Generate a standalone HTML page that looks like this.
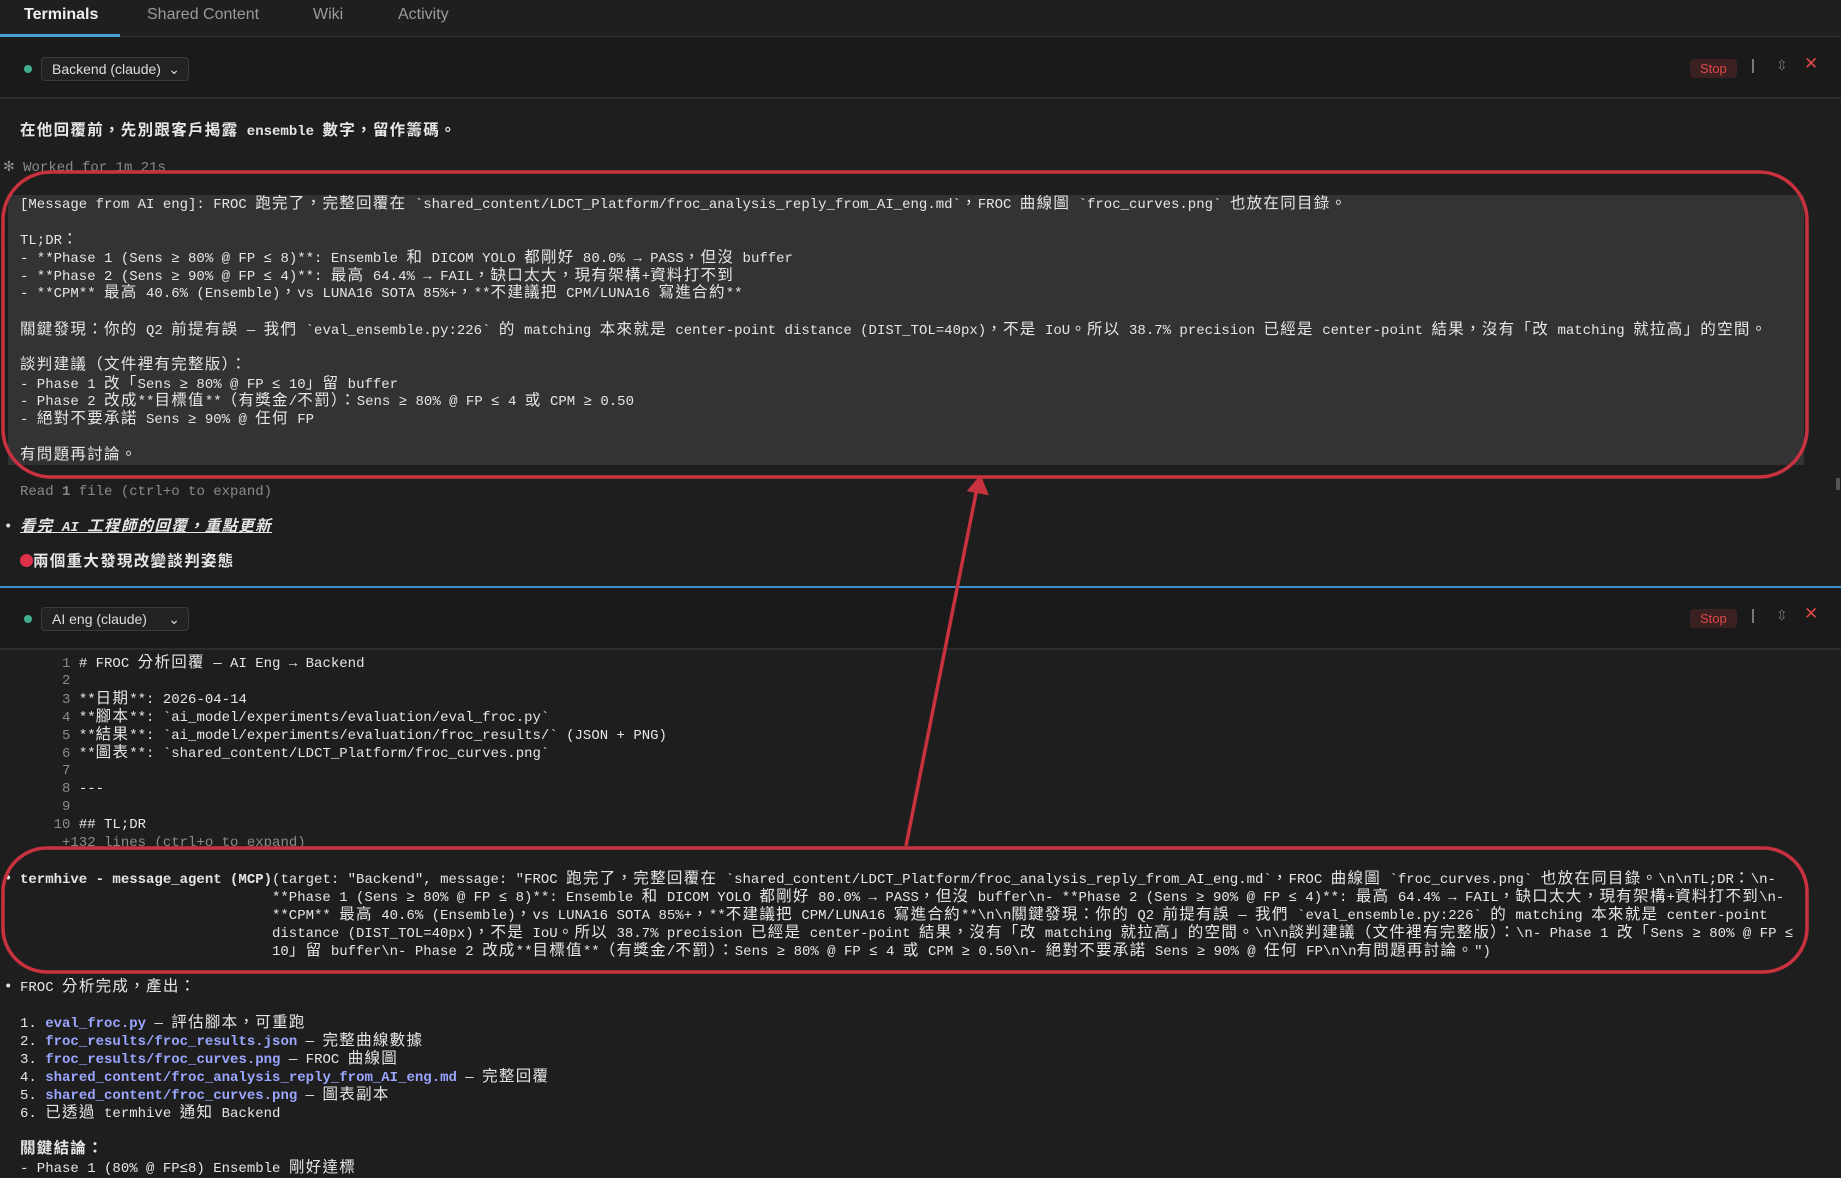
<!DOCTYPE html>
<html><head><meta charset="utf-8"><style>
*{margin:0;padding:0;box-sizing:border-box}
body{width:1841px;height:1177px;background:#1e1e1e;overflow:hidden;position:relative;font-family:"Liberation Mono","Noto Sans CJK TC",monospace;color:#e6e6e6;font-size:14px}
.ui{font-family:"Liberation Sans","Noto Sans CJK TC",sans-serif}
.l{position:absolute;white-space:pre;line-height:18px;height:18px}
.l .cj{letter-spacing:1.3px;font-size:15.5px}
.tabs{position:absolute;left:0;top:0;width:1841px;height:37px;background:#1f1f1f;border-bottom:1px solid #333}
.tab{position:absolute;top:6px;font-size:16px;color:#9a9a9a}
.hdr{position:absolute;left:0;width:1841px;height:62px;background:#1a1a1a;border-bottom:2px solid #2c2c2c}
.dot{position:absolute;width:8px;height:8px;border-radius:50%;background:#3fae8f}
.dd{position:absolute;height:24px;border:1px solid #3a3a3a;border-radius:4px;background:#222;color:#ddd;font-size:14px;padding:3px 10px}
.stop{position:absolute;background:#3a2020;color:#e04848;border-radius:4px;font-size:13px;padding:2px 10px}
.b{font-weight:bold}
.lk{color:#9aa6ff;font-weight:bold}
.dim{color:#8a8a8a}
</style></head><body>
<div class="tabs ui">
<div class="tab" style="left:24px;color:#eee;font-weight:bold">Terminals</div>
<div class="tab" style="left:147px">Shared Content</div>
<div class="tab" style="left:313px">Wiki</div>
<div class="tab" style="left:398px">Activity</div>
<div style="position:absolute;left:0;top:34px;width:120px;height:3px;background:#4a9fd8"></div>
</div>
<div class="hdr ui" style="top:37px">
<div class="dot" style="left:24px;top:28px"></div>
<div class="dd" style="left:41px;top:20px;width:148px">Backend (claude) <span style="position:absolute;right:8px">⌄</span></div>
<div class="stop" style="left:1690px;top:22px">Stop</div>
<div style="position:absolute;left:1752px;top:22px;width:2px;height:14px;background:#777"></div>
<div style="position:absolute;left:1776px;top:20px;color:#777;font-size:14px">⇳</div>
<div style="position:absolute;left:1804px;top:17px;color:#e04848;font-size:17px">✕</div>
</div>
<div class="l b" style="left:20px;top:122px">在他回覆前，先別跟客戶揭露 ensemble 數字，留作籌碼。</div>
<div class="l dim" style="left:3px;top:159px">✻ Worked for 1m 21s</div>
<div style="position:absolute;left:8px;top:195px;width:1796px;height:270px;background:#333"></div>
<div class="l" style="left:20px;top:195px">[Message from AI eng]: FROC 跑完了，完整回覆在 `shared_content/LDCT_Platform/froc_analysis_reply_from_AI_eng.md`，FROC 曲線圖 `froc_curves.png` 也放在同目錄。</div>
<div class="l" style="left:20px;top:231px">TL;DR：</div>
<div class="l" style="left:20px;top:249px">- **Phase 1 (Sens ≥ 80% @ FP ≤ 8)**: Ensemble 和 DICOM YOLO 都剛好 80.0% → PASS，但沒 buffer</div>
<div class="l" style="left:20px;top:267px">- **Phase 2 (Sens ≥ 90% @ FP ≤ 4)**: 最高 64.4% → FAIL，缺口太大，現有架構+資料打不到</div>
<div class="l" style="left:20px;top:284px">- **CPM** 最高 40.6% (Ensemble)，vs LUNA16 SOTA 85%+，**不建議把 CPM/LUNA16 寫進合約**</div>
<div class="l" style="left:20px;top:321px">關鍵發現：你的 Q2 前提有誤 — 我們 `eval_ensemble.py:226` 的 matching 本來就是 center-point distance (DIST_TOL=40px)，不是 IoU。所以 38.7% precision 已經是 center-point 結果，沒有「改 matching 就拉高」的空間。</div>
<div class="l" style="left:20px;top:356px">談判建議（文件裡有完整版）：</div>
<div class="l" style="left:20px;top:375px">- Phase 1 改「Sens ≥ 80% @ FP ≤ 10」留 buffer</div>
<div class="l" style="left:20px;top:392px">- Phase 2 改成**目標值**（有獎金/不罰）：Sens ≥ 80% @ FP ≤ 4 或 CPM ≥ 0.50</div>
<div class="l" style="left:20px;top:410px">- 絕對不要承諾 Sens ≥ 90% @ 任何 FP</div>
<div class="l" style="left:20px;top:446px">有問題再討論。</div>
<div class="l dim" style="left:20px;top:483px">Read <b>1</b> file (ctrl+o to expand)</div>
<div class="l b" style="left:4px;top:518px">•</div>
<div class="l b" style="left:20px;top:518px;font-style:italic;text-decoration:underline">看完 AI 工程師的回覆，重點更新</div>
<div class="l b" style="left:20px;top:553px"><span style="display:inline-block;width:13px;height:13px;border-radius:50%;background:#e0314a;vertical-align:-1px"></span>兩個重大發現改變談判姿態</div>
<div style="position:absolute;left:1836px;top:478px;width:4px;height:12px;background:#555"></div>
<div style="position:absolute;left:0;top:586px;width:1841px;height:2px;background:#3d8fc6"></div>
<div class="hdr ui" style="top:588px">
<div class="dot" style="left:24px;top:27px"></div>
<div class="dd" style="left:41px;top:19px;width:148px">AI eng (claude) <span style="position:absolute;right:8px">⌄</span></div>
<div class="stop" style="left:1690px;top:21px">Stop</div>
<div style="position:absolute;left:1752px;top:21px;width:2px;height:14px;background:#777"></div>
<div style="position:absolute;left:1776px;top:19px;color:#777;font-size:14px">⇳</div>
<div style="position:absolute;left:1804px;top:16px;color:#e04848;font-size:17px">✕</div>
</div>
<div class="l" style="left:20px;top:654px"><span class="dim">     1</span> # FROC 分析回覆 — AI Eng → Backend</div>
<div class="l" style="left:20px;top:672px"><span class="dim">     2</span></div>
<div class="l" style="left:20px;top:690px"><span class="dim">     3</span> **日期**: 2026-04-14</div>
<div class="l" style="left:20px;top:708px"><span class="dim">     4</span> **腳本**: `ai_model/experiments/evaluation/eval_froc.py`</div>
<div class="l" style="left:20px;top:726px"><span class="dim">     5</span> **結果**: `ai_model/experiments/evaluation/froc_results/` (JSON + PNG)</div>
<div class="l" style="left:20px;top:744px"><span class="dim">     6</span> **圖表**: `shared_content/LDCT_Platform/froc_curves.png`</div>
<div class="l" style="left:20px;top:762px"><span class="dim">     7</span></div>
<div class="l" style="left:20px;top:780px"><span class="dim">     8</span> ---</div>
<div class="l" style="left:20px;top:798px"><span class="dim">     9</span></div>
<div class="l" style="left:20px;top:816px"><span class="dim">    10</span> ## TL;DR</div>
<div class="l dim" style="left:20px;top:834px">     +132 lines (ctrl+o to expand)</div>
<div class="l b" style="left:4px;top:870px">•</div>
<div class="l" style="left:20px;top:870px;width:1821px;overflow:hidden"><b>termhive - message_agent (MCP)</b>(target: "Backend", message: "FROC 跑完了，完整回覆在 `shared_content/LDCT_Platform/froc_analysis_reply_from_AI_eng.md`，FROC 曲線圖 `froc_curves.png` 也放在同目錄。\n\nTL;DR：\n-</div>
<div class="l" style="left:272px;top:888px;width:1569px;overflow:hidden">**Phase 1 (Sens ≥ 80% @ FP ≤ 8)**: Ensemble 和 DICOM YOLO 都剛好 80.0% → PASS，但沒 buffer\n- **Phase 2 (Sens ≥ 90% @ FP ≤ 4)**: 最高 64.4% → FAIL，缺口太大，現有架構+資料打不到\n-</div>
<div class="l" style="left:272px;top:906px;width:1569px;overflow:hidden">**CPM** 最高 40.6% (Ensemble)，vs LUNA16 SOTA 85%+，**不建議把 CPM/LUNA16 寫進合約**\n\n關鍵發現：你的 Q2 前提有誤 — 我們 `eval_ensemble.py:226` 的 matching 本來就是 center-point</div>
<div class="l" style="left:272px;top:924px;width:1569px;overflow:hidden">distance (DIST_TOL=40px)，不是 IoU。所以 38.7% precision 已經是 center-point 結果，沒有「改 matching 就拉高」的空間。\n\n談判建議（文件裡有完整版）：\n- Phase 1 改「Sens ≥ 80% @ FP ≤</div>
<div class="l" style="left:272px;top:942px">10」留 buffer\n- Phase 2 改成**目標值**（有獎金/不罰）：Sens ≥ 80% @ FP ≤ 4 或 CPM ≥ 0.50\n- 絕對不要承諾 Sens ≥ 90% @ 任何 FP\n\n有問題再討論。")</div>
<div class="l b" style="left:4px;top:978px">•</div>
<div class="l" style="left:20px;top:978px">FROC 分析完成，產出：</div>
<div class="l" style="left:20px;top:1014px">1. <span class="lk">eval_froc.py</span> — 評估腳本，可重跑</div>
<div class="l" style="left:20px;top:1032px">2. <span class="lk">froc_results/froc_results.json</span> — 完整曲線數據</div>
<div class="l" style="left:20px;top:1050px">3. <span class="lk">froc_results/froc_curves.png</span> — FROC 曲線圖</div>
<div class="l" style="left:20px;top:1068px">4. <span class="lk">shared_content/froc_analysis_reply_from_AI_eng.md</span> — 完整回覆</div>
<div class="l" style="left:20px;top:1086px">5. <span class="lk">shared_content/froc_curves.png</span> — 圖表副本</div>
<div class="l" style="left:20px;top:1104px">6. 已透過 termhive 通知 Backend</div>
<div class="l b" style="left:20px;top:1140px">關鍵結論：</div>
<div class="l" style="left:20px;top:1159px">- Phase 1 (80% @ FP≤8) Ensemble 剛好達標</div>
<svg width="1841" height="1177" style="position:absolute;left:0;top:0" fill="none" stroke="#c8323f" stroke-width="3.5">
<rect x="3" y="172" width="1804" height="305" rx="48"/>
<rect x="3" y="848" width="1804" height="124" rx="44"/>
<line x1="906" y1="846" x2="977" y2="488"/>
<path d="M970 490 L980 478 L986 493 Z" fill="#c8323f"/>
</svg>
<script>
(function(){
var re=/[\u3000-\u9fff\uff00-\uffef]+/g;
document.querySelectorAll('.l').forEach(function(el){
var w=document.createTreeWalker(el,NodeFilter.SHOW_TEXT,null),ns=[],n;
while(n=w.nextNode())ns.push(n);
ns.forEach(function(t){
var s=t.nodeValue;if(!re.test(s))return;re.lastIndex=0;
var f=document.createDocumentFragment(),last=0,m;
while(m=re.exec(s)){
if(m.index>last)f.appendChild(document.createTextNode(s.slice(last,m.index)));
var sp=document.createElement('span');sp.className='cj';sp.textContent=m[0];f.appendChild(sp);
last=m.index+m[0].length;}
if(last<s.length)f.appendChild(document.createTextNode(s.slice(last)));
t.parentNode.replaceChild(f,t);});});
})();
</script>
</body></html>
